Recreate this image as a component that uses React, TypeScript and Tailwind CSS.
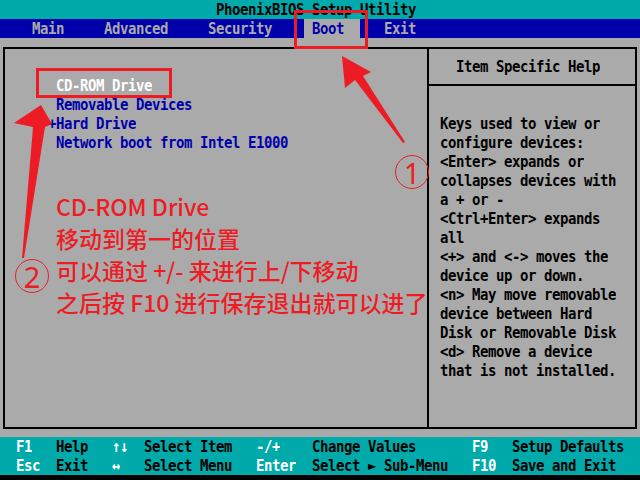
const red = '#ed1c24';

const helpLines = [
  'Keys used to view or',
  'configure devices:',
  '<Enter> expands or',
  'collapses devices with',
  'a + or -',
  '<Ctrl+Enter> expands',
  'all',
  '<+> and <-> moves the',
  'device up or down.',
  '<n> May move removable',
  'device between Hard',
  'Disk or Removable Disk',
  '<d> Remove a device',
  'that is not installed.',
];

const footerRows = [
  ['F1', 'Help', '↑↓', 'Select Item', '-/+', 'Change Values', 'F9', 'Setup Defaults'],
  ['Esc', 'Exit', '↔', 'Select Menu', 'Enter', 'Select ► Sub-Menu', 'F10', 'Save and Exit'],
];

// stretch the mono glyphs a bit so they look like the tall VGA font
const tall = 'scale-y-[1.15]';

function Circled({ n, className }: { n: string; className: string }) {
  return (
    <div
      className={`absolute flex h-[34px] w-[34px] items-center justify-center rounded-full border-[1.5px] border-[#ed1c24] font-['Noto_Sans',sans-serif] text-[29px] font-normal leading-none tracking-normal text-[#ed1c24] ${className}`}
    >
      {n}
    </div>
  );
}

export default function App() {
  return (
    <div className="relative h-[480px] w-[640px] overflow-hidden bg-[#aaaaaa] font-['DejaVu_Sans_Mono',monospace] text-[14px] font-bold leading-[19px] tracking-[-0.43px] whitespace-pre">
      {/* title */}
      <div className="h-[19px] bg-[#00aaaa] pl-[216px] text-black">
        <div className={tall}>PhoenixBIOS Setup Utility</div>
      </div>

      {/* menu bar */}
      <div className="flex h-[19px] bg-[#0000aa] pl-[32px] text-[#aaaaaa]">
        <span className={`w-[72px] ${tall}`}>Main</span>
        <span className={`w-[104px] ${tall}`}>Advanced</span>
        <span className={`w-[96px] ${tall}`}>Security</span>
        <span className="w-[56px] bg-[#aaaaaa] pl-[8px] text-[#0000aa]">
          <span className={`block ${tall}`}>Boot</span>
        </span>
        <span className={`ml-[24px] ${tall}`}>Exit</span>
      </div>

      {/* main box */}
      <div className="mx-[3px] mt-[9px] flex h-[382px] border-2 border-black">
        <div className="w-[422px] pl-[43px] pt-[27px]">
          <div className={`text-white ${tall}`}> CD-ROM Drive</div>
          <div className={`text-[#0000aa] ${tall}`}> Removable Devices</div>
          <div className={`text-[#0000aa] ${tall}`}>+Hard Drive</div>
          <div className={`text-[#0000aa] ${tall}`}> Network boot from Intel E1000</div>

          <div className="mt-[38px] pl-[8px] font-['Noto_Sans_CJK_SC',sans-serif] text-[23px] font-medium leading-[32px] tracking-normal text-[#ed1c24]">
            <div>CD-ROM Drive</div>
            <div>移动到第一的位置</div>
            <div>可以通过 +/- 来进行上/下移动</div>
            <div>之后按 F10 进行保存退出就可以进了</div>
          </div>
        </div>

        <div className="flex-1 border-l-2 border-black">
          <div className="border-b-2 border-black pb-[8px] pl-[27px] pt-[8px] text-black">
            <div className={tall}>Item Specific Help</div>
          </div>
          <div className="mt-[28px] pl-[11px] text-black">
            {helpLines.map((l, i) => (
              <div key={i} className={tall}>
                {l}
              </div>
            ))}
          </div>
        </div>
      </div>

      {/* footer */}
      <div className="mt-[8px] h-[38px] bg-[#00aaaa] pl-[16px]">
        {footerRows.map((row, i) => (
          <div key={i} className="grid grid-cols-[40px_56px_32px_112px_56px_160px_40px_1fr]">
            {row.map((cell, j) => (
              <span key={j} className={`${tall} ${j % 2 === 0 ? 'text-white' : 'text-black'}`}>
                {cell}
              </span>
            ))}
          </div>
        ))}
      </div>
      <div className="h-[5px] bg-black" />

      {/* annotations */}
      <div className="absolute left-[294px] top-[10px] h-[39px] w-[74px] border-[3px] border-[#ed1c24]" />
      <div className="absolute left-[36px] top-[68px] h-[30px] w-[136px] border-[3px] border-[#ed1c24]" />
      <svg className="pointer-events-none absolute left-0 top-0" width="640" height="480" viewBox="0 0 640 480">
        <polygon fill={red} points="342,56 371,72 363,76 405,142 403,143 355,80 345,88" />
        <polygon fill={red} points="41,105 52,124 45,127 24,258 22,258 33,127 14,123" />
      </svg>
      <Circled n="1" className="left-[395px] top-[155px]" />
      <Circled n="2" className="left-[15px] top-[259px]" />
    </div>
  );
}
